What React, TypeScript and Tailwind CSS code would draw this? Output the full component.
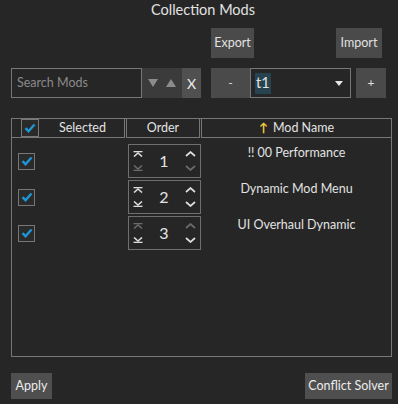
import React from 'react'

interface Mod {
  id: number
  name: string
  topOk: boolean
  bottomOk: boolean
}

const mods: Mod[] = [
  { id: 1, name: '!! 00 Performance', topOk: true, bottomOk: false },
  { id: 2, name: 'Dynamic Mod Menu', topOk: true, bottomOk: true },
  { id: 3, name: 'UI Overhaul Dynamic', topOk: false, bottomOk: true },
]

const on = '#dcdcdc'
const off = '#6b6b6b'

function Check({ big }: { big?: boolean }) {
  return (
    <div
      className={`${big ? 'w-[18px] h-[18px]' : 'w-[17px] h-[17px]'} border border-[#777777] bg-[#2a2a2a] flex items-center justify-center`}
    >
      <svg width="12" height="10" viewBox="0 0 12 10">
        <path d="M1.5 5.2 L4.5 8.2 L10.5 1.5" fill="none" stroke="#1c97d4" strokeWidth="2.4" />
      </svg>
    </div>
  )
}

function ToTop({ c }: { c: string }) {
  return (
    <svg width="10" height="6" viewBox="0 0 10 6">
      <rect x="0.5" y="0" width="9" height="1.3" fill={c} />
      <path d="M1 5.5 L5 2 L9 5.5" fill="none" stroke={c} strokeWidth="1.6" />
    </svg>
  )
}

function ToBottom({ c }: { c: string }) {
  return (
    <svg width="10" height="6" viewBox="0 0 10 6">
      <path d="M1 0.5 L5 4 L9 0.5" fill="none" stroke={c} strokeWidth="1.6" />
      <rect x="0.5" y="4.7" width="9" height="1.3" fill={c} />
    </svg>
  )
}

function Up({ c }: { c: string }) {
  return (
    <svg width="11" height="6" viewBox="0 0 11 6">
      <path d="M1 5 L5.5 1 L10 5" fill="none" stroke={c} strokeWidth="1.7" />
    </svg>
  )
}

function Down({ c }: { c: string }) {
  return (
    <svg width="11" height="6" viewBox="0 0 11 6">
      <path d="M1 1 L5.5 5 L10 1" fill="none" stroke={c} strokeWidth="1.7" />
    </svg>
  )
}

function Spinner({ mod }: { mod: Mod }) {
  return (
    <div className="w-[73px] h-[34px] border border-[#6f6f6f] flex items-stretch px-[4px]">
      <div className="flex flex-col justify-between py-[6px]">
        <ToTop c={mod.topOk ? on : off} />
        <ToBottom c={mod.bottomOk ? on : off} />
      </div>
      <div className="flex-1 flex items-center justify-center text-[16px] text-[#e4e4e4]">{mod.id}</div>
      <div className="flex flex-col justify-between py-[6px]">
        <Up c={mod.topOk ? on : off} />
        <Down c={mod.bottomOk ? on : off} />
      </div>
    </div>
  )
}

export default function App() {
  return (
    <div
      className="w-[398px] h-[404px] bg-[#262626] text-[#e2e2e2] flex flex-col pl-[11px] pr-[6px] text-[12.5px] whitespace-nowrap"
      style={{ fontFamily: 'Lato, "Noto Sans", sans-serif' }}
    >
      <div className="h-[28px] leading-[20px] text-center text-[14.5px] pl-[3px]">Collection Mods</div>

      <div className="h-[30px] flex">
        <div className="w-[200px]" />
        <button className="w-[43px] h-[30px] bg-[#4a4a4a] text-[#e2e2e2]">Export</button>
        <div className="flex-1" />
        <button className="w-[46px] h-[30px] bg-[#4a4a4a] text-[#e2e2e2] mr-[10px]">Import</button>
      </div>

      <div className="h-[30px] flex mt-[10px]">
        <div className="w-[131px] h-[30px] border border-[#777777] flex items-center px-[5px] text-[#8a8a8a]">
          Search Mods
        </div>
        <div className="w-[40px] h-[30px] bg-[#3b3b3b] flex items-center justify-center gap-[8px]">
          <svg width="10" height="8" viewBox="0 0 10 8">
            <path d="M0 0 L10 0 L5 8 Z" fill="#8c8c8c" />
          </svg>
          <svg width="10" height="8" viewBox="0 0 10 8">
            <path d="M0 8 L10 8 L5 0 Z" fill="#8c8c8c" />
          </svg>
        </div>
        <button className="w-[19px] h-[30px] bg-[#505050] text-[#f0f0f0] text-[14px]">X</button>
        <div className="w-[10px]" />
        <button className="w-[39px] h-[30px] bg-[#4a4a4a] text-[#e2e2e2] text-[12px]">-</button>
        <div className="w-[101px] h-[30px] border border-[#777777] flex items-center pl-[4px] pr-[7px]">
          <span className="bg-[#26434f] h-[21px] px-[1px] flex items-center text-[14.5px]">t1</span>
          <div className="flex-1" />
          <svg width="8" height="5" viewBox="0 0 8 5">
            <path d="M0 0 L8 0 L4 5 Z" fill="#e6e6e6" />
          </svg>
        </div>
        <div className="w-[5px]" />
        <button className="w-[30px] h-[30px] bg-[#4a4a4a] text-[#e2e2e2] text-[12px]">+</button>
      </div>

      <div className="mt-[20px] w-[381px] h-[239px] border border-[#777777] flex flex-col">
        <div className="h-[19px] flex gap-[1px]">
          <div className="w-[113px] border-r border-b border-[#777777] flex items-center">
            <div className="pl-[9px]">
              <Check big />
            </div>
            <div className="flex-1 text-center leading-[18px] pl-[2px]">Selected</div>
          </div>
          <div className="w-[74px] border-x border-b border-[#777777] flex items-center justify-center leading-[18px]">
            Order
          </div>
          <div className="flex-1 border-l border-b border-[#777777] flex items-center justify-center leading-[18px]">
            <span className="text-[#f2d23c] text-[12px] font-bold mr-[5px]">↑</span>
            Mod Name
          </div>
        </div>

        <div className="flex flex-col gap-[2px] pt-[6px]">
          {mods.map((m) => (
            <div key={m.id} className="h-[34px] flex">
              <div className="w-[116px] flex items-center pl-[6px]">
                <Check />
              </div>
              <Spinner mod={m} />
              <div className="flex-1 text-center leading-[18px] pl-[1px]">{m.name}</div>
            </div>
          ))}
        </div>
      </div>

      <div className="mt-[16px] flex">
        <button className="w-[41px] h-[26px] bg-[#4f4f4f] text-[#ececec]">Apply</button>
        <div className="flex-1" />
        <button className="w-[87px] h-[26px] bg-[#4f4f4f] text-[#ececec]">Conflict Solver</button>
      </div>
    </div>
  )
}
